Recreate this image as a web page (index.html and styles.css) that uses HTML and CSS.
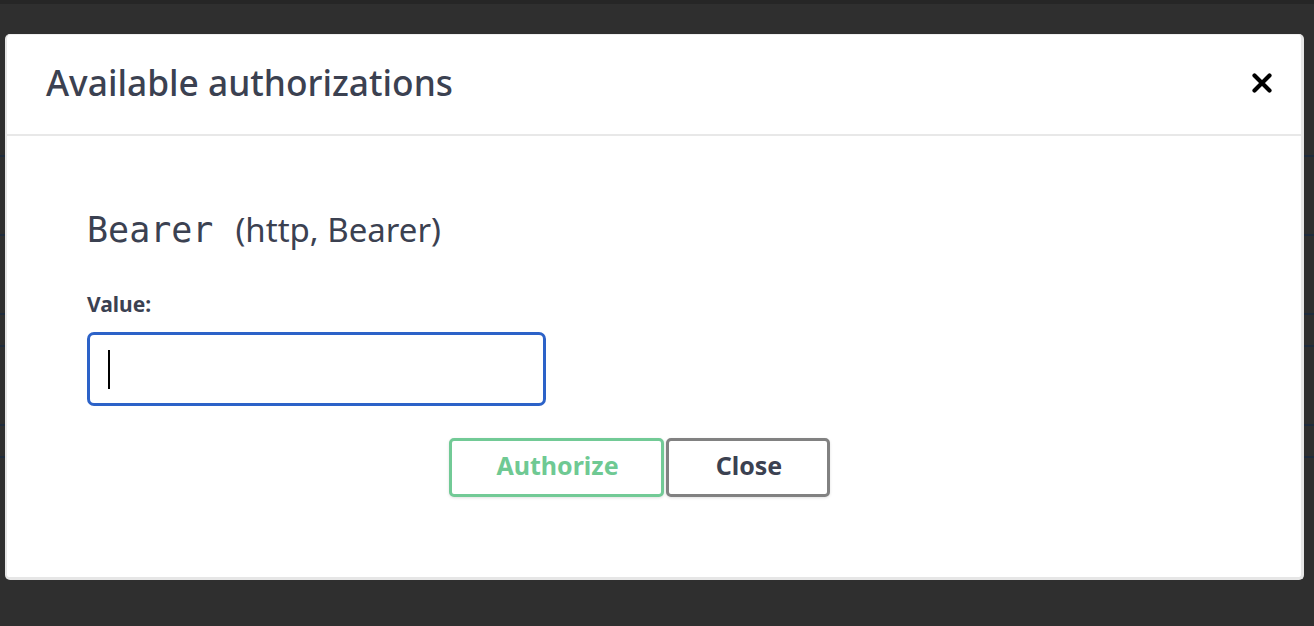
FILE: index.html
```html
<!DOCTYPE html>
<html lang="en">
<head>
<meta charset="utf-8">
<title>Available authorizations</title>
<link rel="stylesheet" href="styles.css">
</head>
<body>
<div class="page">
  <div class="topband"></div>
  <div class="bg-row tall"></div>
  <div class="bg-row tall"></div>
  <div class="bg-row short"></div>
  <div class="bg-row tall"></div>
  <div class="bg-row short"></div>
  <div class="bg-row tall"></div>
</div>

<div class="modal">
  <div class="modal-header">
    <h3 class="modal-title">Available authorizations</h3>
    <button class="close-x" aria-label="Close">
      <svg width="20" height="20" viewBox="0 0 20 20"><path d="M2.5 2.5 L17.5 17.5 M17.5 2.5 L2.5 17.5" stroke="#000" stroke-width="4.2" stroke-linecap="round" fill="none"/></svg>
    </button>
  </div>
  <div class="modal-body">
    <h4 class="scheme"><code class="scheme-name">Bearer</code><span class="scheme-type">(http, Bearer)</span></h4>
    <label class="value-label" for="auth-value">Value:</label>
    <div class="input-wrap">
      <input id="auth-value" class="value-input" type="text">
      <span class="caret"></span>
    </div>
    <div class="btn-row">
      <button class="btn btn-authorize">Authorize</button>
      <button class="btn btn-close">Close</button>
    </div>
  </div>
</div>
</body>
</html>
```

FILE: styles.css
```css
html, body {
  margin: 0;
  padding: 0;
}
body {
  width: 1314px;
  height: 626px;
  overflow: hidden;
  background: #2f2f2f;
  font-family: "Noto Sans", "Open Sans", sans-serif;
  color: #3b4151;
  position: relative;
}
.page {
  display: flex;
  flex-direction: column;
}
.topband {
  height: 4px;
  background: #262626;
  margin-bottom: 151px;
}
.bg-row {
  border-top: 2px solid #1e2b3c;
}
.bg-row.tall { height: 77px; }
.bg-row.short { height: 30px; }

.modal {
  position: absolute;
  left: 5px;
  top: 34px;
  width: 1294px;
  height: 542px;
  background: #fff;
  border: 2px solid #e6e6e6;
  border-top: 1px solid #f0f0f0;
  border-right-width: 3px;
  border-bottom-width: 3px;
  border-radius: 5px;
  display: flex;
  flex-direction: column;
}
.modal-header {
  height: 101px;
  border-bottom: 2px solid #e8e8e8;
  display: flex;
  align-items: center;
  justify-content: space-between;
  padding: 0 29px 6px 39px;
  box-sizing: border-box;
}
.modal-title {
  margin: 0;
  font-size: 35.3px;
  font-weight: 500;
  color: #3b4151;
}
.close-x {
  border: 0;
  background: none;
  padding: 0;
  width: 20px;
  height: 20px;
  display: flex;
  margin-top: 2px;
}
.modal-body {
  padding: 70px 80px 0 80px;
  display: flex;
  flex-direction: column;
}
.scheme {
  margin: 0;
  display: flex;
  align-items: baseline;
  font-weight: 400;
  line-height: 48px;
}
.scheme-name {
  font-family: "DejaVu Sans Mono", monospace;
  font-size: 35px;
  margin-right: 22px;
  color: #3b4151;
}
.scheme-type {
  font-size: 33px;
}
.value-label {
  margin-top: 36px;
  font-size: 21px;
  font-weight: 700;
  line-height: 28px;
}
.input-wrap {
  margin-top: 14px;
  position: relative;
  width: 459px;
  height: 74px;
}
.value-input {
  box-sizing: border-box;
  width: 100%;
  height: 100%;
  border: 3px solid #2c62c8;
  border-radius: 7px;
  outline: none;
  padding: 0 20px;
  font-size: 24px;
  caret-color: transparent;
  background: #fff;
}
.caret {
  position: absolute;
  left: 21px;
  top: 18px;
  width: 2px;
  height: 39px;
  background: #000;
}
.btn-row {
  margin-top: 32px;
  display: flex;
  justify-content: center;
  gap: 2px;
  padding-right: 29px;
}
.btn {
  box-sizing: border-box;
  height: 59px;
  border-radius: 5px;
  background: #fff;
  font-family: "Noto Sans", "Open Sans", sans-serif;
  font-size: 25px;
  font-weight: 700;
  box-shadow: 0 1px 3px rgba(0,0,0,0.12);
  padding: 0 0 6px 2px;
}
.btn-authorize {
  width: 215px;
  border: 3px solid #72ca96;
  color: #6fc993;
}
.btn-close {
  width: 164px;
  border: 3px solid #818181;
  color: #3b4151;
}
```
